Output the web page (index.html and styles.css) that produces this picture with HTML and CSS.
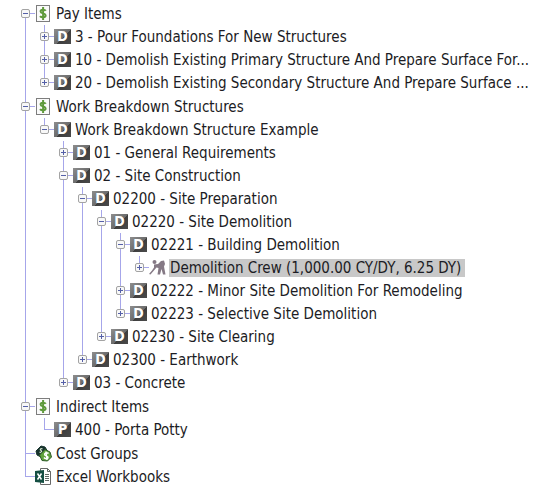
FILE: index.html
```
<!DOCTYPE html>
<html lang="en">
<head>
  <meta charset="UTF-8">
  <meta name="viewport" content="width=device-width, initial-scale=1.0">
  <title>Project Tree</title>
  <link rel="stylesheet" href="styles.css">
</head>
<body>
  <!-- shared icons -->
  <svg class="sprite" aria-hidden="true">
    <symbol id="dollar" viewBox="0 0 17 17">
      <rect x="1.5" y="0.5" width="13" height="16" fill="#fafafa" stroke="#7d7d7d"/>
      <path d="M10.8 5.8C9.8 4.3 5.6 4 5.6 6.4C5.6 8.8 10.6 7.9 10.6 10.5C10.6 13 6.2 12.7 5 11.2M8.1 2V15" fill="none" stroke="#5f9a3c" stroke-width="2"/>
    </symbol>
    <symbol id="crew" viewBox="0 0 17 16">
      <circle cx="5.5" cy="2.5" r="2" fill="#857985"/>
      <path d="M5 5L9 4.5L12 1.5L15 1L16 4.5L15 7L16.5 15H14L12.5 9.5L11 15H8.5L9.5 8.5L7.5 8L1.5 15L0 14.5L3 11L5 8Z" fill="#857985"/>
    </symbol>
    <symbol id="groups" viewBox="0 0 17 17">
      <path d="M1 6L6 1L10 2L13 7L8 13L2 10Z" fill="#17332d" stroke="#17332d" stroke-linejoin="round"/>
      <path d="M4.5 7C6 8 7.5 6 6 5.5C4.5 5 5.5 3 7.5 4" fill="none" stroke="#d5e6cf" stroke-width="1.2"/>
      <path d="M4.5 10L10 4.5L15 7L16.5 12L12.5 16L7 15.5Z" fill="#5fa33a" stroke="#2f5b2a" stroke-linejoin="round"/>
      <path d="M13.5 8.5C12 7 9 8 9.8 9.8C10.5 11.2 13.5 10.8 13 12.7C12.5 14.2 10 14 9 12.5M11 6.5L12 15" fill="none" stroke="#fff" stroke-width="1.5"/>
    </symbol>
    <symbol id="excel" viewBox="0 0 17 17">
      <path d="M5.5 0.5H12.5L15.5 3.5V16.5H5.5Z" fill="#fff" stroke="#686868"/>
      <path d="M12.5 0.5V3.5H15.5M10 6.5H14M10 8.5H14M10 10.5H14M10 12.5H14" fill="none" stroke="#5f6b66"/>
      <path d="M0 3L9 2V15L0 14Z" fill="#154f43"/>
      <path d="M2.5 5.5L6.5 11.5M6.5 5.5L2.5 11.5" stroke="#fff" stroke-width="1.5"/>
    </symbol>
  </svg>

  <ul class="tree">
    <li>
      <div class="row"><button class="toggle open" aria-label="Collapse"></button><svg class="icon"><use href="#dollar"/></svg><span class="label">Pay Items</span></div>
      <ul>
        <li><div class="row"><button class="toggle" aria-label="Expand"></button><span class="tile">D</span><span class="label">3 - Pour Foundations For New Structures</span></div></li>
        <li><div class="row"><button class="toggle" aria-label="Expand"></button><span class="tile">D</span><span class="label">10 - Demolish Existing Primary Structure And Prepare Surface For...</span></div></li>
        <li><div class="row"><button class="toggle" aria-label="Expand"></button><span class="tile">D</span><span class="label">20 - Demolish Existing Secondary Structure And Prepare Surface ...</span></div></li>
      </ul>
    </li>
    <li>
      <div class="row"><button class="toggle open" aria-label="Collapse"></button><svg class="icon"><use href="#dollar"/></svg><span class="label">Work Breakdown Structures</span></div>
      <ul>
        <li>
          <div class="row"><button class="toggle open" aria-label="Collapse"></button><span class="tile">D</span><span class="label">Work Breakdown Structure Example</span></div>
          <ul>
            <li><div class="row"><button class="toggle" aria-label="Expand"></button><span class="tile">D</span><span class="label">01 - General Requirements</span></div></li>
            <li>
              <div class="row"><button class="toggle open" aria-label="Collapse"></button><span class="tile">D</span><span class="label">02 - Site Construction</span></div>
              <ul>
                <li>
                  <div class="row"><button class="toggle open" aria-label="Collapse"></button><span class="tile">D</span><span class="label">02200 - Site Preparation</span></div>
                  <ul>
                    <li>
                      <div class="row"><button class="toggle open" aria-label="Collapse"></button><span class="tile">D</span><span class="label">02220 - Site Demolition</span></div>
                      <ul>
                        <li>
                          <div class="row"><button class="toggle open" aria-label="Collapse"></button><span class="tile">D</span><span class="label">02221 - Building Demolition</span></div>
                          <ul>
                            <li><div class="row"><button class="toggle" aria-label="Expand"></button><svg class="icon"><use href="#crew"/></svg><span class="label selected">Demolition Crew (1,000.00 CY/DY, 6.25 DY)</span></div></li>
                          </ul>
                        </li>
                        <li><div class="row"><button class="toggle" aria-label="Expand"></button><span class="tile">D</span><span class="label">02222 - Minor Site Demolition For Remodeling</span></div></li>
                        <li><div class="row"><button class="toggle" aria-label="Expand"></button><span class="tile">D</span><span class="label">02223 - Selective Site Demolition</span></div></li>
                      </ul>
                    </li>
                    <li><div class="row"><button class="toggle" aria-label="Expand"></button><span class="tile">D</span><span class="label">02230 - Site Clearing</span></div></li>
                  </ul>
                </li>
                <li><div class="row"><button class="toggle" aria-label="Expand"></button><span class="tile">D</span><span class="label">02300 - Earthwork</span></div></li>
              </ul>
            </li>
            <li><div class="row"><button class="toggle" aria-label="Expand"></button><span class="tile">D</span><span class="label">03 - Concrete</span></div></li>
          </ul>
        </li>
      </ul>
    </li>
    <li>
      <div class="row"><button class="toggle open" aria-label="Collapse"></button><svg class="icon"><use href="#dollar"/></svg><span class="label">Indirect Items</span></div>
      <ul>
        <li><div class="row leaf"><span class="tile">P</span><span class="label">400 - Porta Potty</span></div></li>
      </ul>
    </li>
    <li><div class="row leaf"><svg class="icon"><use href="#groups"/></svg><span class="label">Cost Groups</span></div></li>
    <li><div class="row leaf"><svg class="icon"><use href="#excel"/></svg><span class="label">Excel Workbooks</span></div></li>
  </ul>
</body>
</html>
```
FILE: styles.css
```
body {
  margin: 0;
  background-color: #fff;
  color: #1c1c24;
  font-family: "DejaVu Sans Condensed", "DejaVu Sans", sans-serif;
  font-size: 15px;
}

.sprite {
  display: block;
  width: 0;
  height: 0;
}

ul {
  list-style: none;
  margin: 0;
  padding: 0;
}

.tree {
  padding: 2px 0 0 21px;
}

.tree ul {
  margin-left: 19px;
}

/* gap under each top level group */
.tree > li > ul {
  padding-bottom: 1px;
}

/* vertical guide line */
li {
  background: linear-gradient(#a6a6ea, #a6a6ea) 4px 0 / 1px 100% no-repeat;
}

.tree > li:first-child {
  background-position: 4px 12px;
}

li:last-child {
  background-size: 1px 12px;
}

.row {
  display: flex;
  align-items: center;
  height: 23px;
  background: linear-gradient(#a6a6ea, #a6a6ea) 4px 11px / 10px 1px no-repeat;
}

.leaf {
  padding-left: 14px;
}

.toggle {
  flex: none;
  width: 9px;
  height: 9px;
  margin: 0 5px 0 0;
  padding: 0;
  border: 1px solid #a3a3a3;
  border-radius: 2px;
  background:
    linear-gradient(#5560a8, #5560a8) center / 5px 1px no-repeat,
    linear-gradient(#5560a8, #5560a8) center / 1px 5px no-repeat,
    #f8f8f8;
}

.toggle.open {
  background: linear-gradient(#5560a8, #5560a8) center / 5px 1px no-repeat, #f8f8f8;
}

.icon {
  flex: none;
  width: 17px;
  height: 17px;
}

.tile {
  flex: none;
  width: 17px;
  height: 15px;
  background: linear-gradient(135deg, #8e8e8e 0%, #6a6a6a 55%, #3e3e3e 56%, #4a4a4a 100%);
  color: #fff;
  font-size: 14px;
  font-weight: bold;
  line-height: 15px;
  text-align: center;
}

.label {
  margin-left: 3px;
  padding: 0 1px;
  line-height: 18px;
  white-space: nowrap;
}

.selected {
  padding-right: 4px;
  background-color: #c8c8c8;
}
```
